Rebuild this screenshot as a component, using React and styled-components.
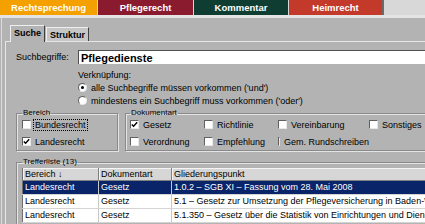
import React from "react";
import styled, { createGlobalStyle } from "styled-components";

const GlobalStyle = createGlobalStyle`
  html, body {
    margin: 0;
    padding: 0;
    overflow: hidden;
  }
  body {
    background: #b3b3b3;
    font-family: "Liberation Sans", Arial, sans-serif;
    font-size: 9px;
    color: #000;
  }
`;

const Page = styled.div`
  width: 480px;
  height: 224px;
  overflow: hidden;
`;

// farbige Bereichsreiter oben
const TopBar = styled.div`
  display: flex;
  gap: 1px;
  height: 15px;
  background: #d8d8d8;
  border-bottom: 3px solid #e4e4e4;
`;

const AreaTab = styled.div`
  width: ${(p) => p.$w}px;
  background: ${(p) => p.$bg};
  color: #fff;
  font-weight: bold;
  font-size: 9.5px;
  display: flex;
  align-items: center;
  justify-content: center;
  border-right: ${(p) => (p.$last ? "2px solid #6a6a6a" : "none")};
`;

const Frame = styled.div`
  margin-left: 1px;
  padding-left: 3px;
  border-left: 1px solid #dcdcdc;
  height: 206px;
`;

const TabStrip = styled.div`
  display: flex;
  align-items: flex-end;
  height: 23px;
  padding-left: 5px;
`;

const InnerTab = styled.div`
  position: relative;
  z-index: 1;
  box-sizing: border-box;
  width: ${(p) => p.$w}px;
  height: ${(p) => (p.$active ? 17 : 14)}px;
  margin-bottom: ${(p) => (p.$active ? -1 : 0)}px;
  margin-right: 1px;
  background: ${(p) => (p.$active ? "#b3b3b3" : "#c6c6c6")};
  border-top: 1px solid #eeeeee;
  border-left: 1px solid #eeeeee;
  border-right: 1px solid #404040;
  font-weight: bold;
  font-size: 9px;
  display: flex;
  align-items: center;
  justify-content: center;
  padding-bottom: ${(p) => (p.$active ? 2 : 0)}px;
`;

const Panel = styled.div`
  border-top: 1px solid #e6e6e6;
  border-left: 1px solid #e6e6e6;
  padding: 8px 0 0 10px;
`;

const SearchRow = styled.div`
  display: grid;
  grid-template-columns: 62px 1fr;
  align-items: center;
`;

const SearchInput = styled.input`
  box-sizing: border-box;
  height: 14px;
  margin: 0;
  padding: 0 2px;
  border: none;
  border-top: 1px solid #505050;
  border-left: 1px solid #505050;
  background: #fff;
  font-family: "Liberation Sans", Arial, sans-serif;
  font-weight: bold;
  font-size: 11px;
  color: #000;
  outline: none;
`;

const Options = styled.div`
  margin: 5px 0 0 62px;
`;

const OptionTitle = styled.div`
  line-height: 12px;
`;

const OptionLine = styled.div`
  display: flex;
  align-items: center;
  gap: 4px;
  height: 13px;
`;

const Radio = styled.span`
  box-sizing: border-box;
  width: 9px;
  height: 9px;
  border-radius: 50%;
  background: #fff;
  border: 1px solid;
  border-color: #606060 #e8e8e8 #e8e8e8 #606060;
  display: flex;
  align-items: center;
  justify-content: center;
  &::after {
    content: "";
    display: ${(p) => (p.$on ? "block" : "none")};
    width: 3px;
    height: 3px;
    border-radius: 50%;
    background: #000;
  }
`;

const GroupsRow = styled.div`
  display: flex;
  gap: 7px;
  margin-top: 1px;
`;

const Group = styled.fieldset`
  box-sizing: border-box;
  margin: 0;
  min-width: 0;
  width: ${(p) => (p.$w ? `${p.$w}px` : "auto")};
  flex: ${(p) => (p.$w ? "none" : "1")};
  padding: 0 ${(p) => p.$pl}px 2px ${(p) => p.$pl}px;
  border: 1px solid #8a8a8a;
  box-shadow: 1px 1px 0 #e4e4e4, inset 1px 1px 0 #e4e4e4;
`;

const Legend = styled.legend`
  padding: 0 1px;
  font-size: 8px;
  line-height: 10px;
`;

const BereichList = styled.div`
  display: flex;
  flex-direction: column;
  gap: 4px;
`;

const DocGrid = styled.div`
  display: grid;
  grid-template-columns: 74px 74px 91px auto;
  row-gap: 4px;
`;

const CheckItem = styled.div`
  display: flex;
  align-items: center;
  gap: 2px;
  height: 13px;
  white-space: nowrap;
`;

const Box = styled.span`
  box-sizing: border-box;
  width: 9px;
  height: 9px;
  background: #fff;
  border: 1px solid;
  border-color: #606060 #e8e8e8 #e8e8e8 #606060;
  display: flex;
  align-items: center;
  justify-content: center;
  svg {
    display: block;
  }
`;

const CheckLabel = styled.span`
  padding: 0 1px;
  line-height: 10px;
  border: 1px ${(p) => (p.$focus ? "dotted #000" : "solid transparent")};
`;

const ResultGroup = styled(Group)`
  margin-top: 6px;
  padding: 1px 0 0 5px;
  height: 80px;
`;

const Table = styled.table`
  border-collapse: collapse;
  table-layout: fixed;
  width: 470px;
  background: #fff;
  border-left: 1px solid #707070;
  white-space: nowrap;
`;

const HeadCell = styled.th`
  width: ${(p) => (p.$w ? `${p.$w}px` : "auto")};
  height: 12px;
  padding: 0 0 0 2px;
  background: #d6d6d6;
  border-right: 1px solid #808080;
  border-bottom: 1px solid #808080;
  box-shadow: inset 1px 1px 0 #f4f4f4;
  font-weight: normal;
  text-align: left;
  line-height: 11px;
  overflow: hidden;
`;

const Row = styled.tr`
  background: ${(p) => (p.$selected ? "#0a246a" : "#fff")};
  color: ${(p) => (p.$selected ? "#fff" : "#000")};
`;

const Cell = styled.td`
  height: 13px;
  padding: 0 0 0 2px;
  border-right: 1px solid #c8c8c8;
  border-bottom: 1px solid #d4d4d4;
  line-height: 13px;
  overflow: hidden;
`;

const Check = ({ on }) => (
  <Box>
    {on && (
      <svg width="7" height="7" viewBox="0 0 7 7">
        <path d="M0.8 3.4 L2.6 5.3 L6.2 1.2" fill="none" stroke="#000" strokeWidth="1.4" />
      </svg>
    )}
  </Box>
);

const areas = [
  { label: "Rechtsprechung", bg: "#f4a100", w: 97 },
  { label: "Pflegerecht", bg: "#8a1b2f", w: 95 },
  { label: "Kommentar", bg: "#0f3d32", w: 94 },
  { label: "Heimrecht", bg: "#c33a2b", w: 93 },
];

const docTypes = [
  { label: "Gesetz", on: true },
  { label: "Richtlinie" },
  { label: "Vereinbarung" },
  { label: "Sonstiges" },
  { label: "Verordnung" },
  { label: "Empfehlung" },
  { label: "Gem. Rundschreiben" },
];

const results = [
  ["Landesrecht", "Gesetz", "1.0.2 – SGB XI – Fassung vom 28. Mai 2008"],
  ["Landesrecht", "Gesetz", "5.1 – Gesetz zur Umsetzung der Pflegeversicherung in Baden-Württemberg"],
  ["Landesrecht", "Gesetz", "5.1.350 – Gesetz über die Statistik von Einrichtungen und Diensten der Pflege"],
];

const App = () => {
  return (
    <Page>
      <GlobalStyle />
      <TopBar>
        {areas.map((a, i) => (
          <AreaTab key={a.label} $bg={a.bg} $w={a.w} $last={i === areas.length - 1}>
            {a.label}
          </AreaTab>
        ))}
      </TopBar>
      <Frame>
        <TabStrip>
          <InnerTab $active $w={35}>Suche</InnerTab>
          <InnerTab $w={43}>Struktur</InnerTab>
        </TabStrip>
        <Panel>
          <SearchRow>
            <span>Suchbegriffe:</span>
            <SearchInput defaultValue="Pflegedienste" readOnly />
          </SearchRow>
          <Options>
            <OptionTitle>Verknüpfung:</OptionTitle>
            <OptionLine>
              <Radio $on />
              <span>alle Suchbegriffe müssen vorkommen ('und')</span>
            </OptionLine>
            <OptionLine>
              <Radio />
              <span>mindestens ein Suchbegriff muss vorkommen ('oder')</span>
            </OptionLine>
          </Options>
          <GroupsRow>
            <Group $w={102} $pl={5}>
              <Legend>Bereich</Legend>
              <BereichList>
                <CheckItem>
                  <Check />
                  <CheckLabel $focus>Bundesrecht</CheckLabel>
                </CheckItem>
                <CheckItem>
                  <Check on />
                  <CheckLabel>Landesrecht</CheckLabel>
                </CheckItem>
              </BereichList>
            </Group>
            <Group $pl={4}>
              <Legend>Dokumentart</Legend>
              <DocGrid>
                {docTypes.map((d) => (
                  <CheckItem key={d.label}>
                    <Check on={d.on} />
                    <CheckLabel>{d.label}</CheckLabel>
                  </CheckItem>
                ))}
              </DocGrid>
            </Group>
          </GroupsRow>
          <ResultGroup>
            <Legend>Trefferliste (13)</Legend>
            <Table>
              <thead>
                <tr>
                  <HeadCell $w={73}>Bereich ↓</HeadCell>
                  <HeadCell $w={70}>Dokumentart</HeadCell>
                  <HeadCell>Gliederungspunkt</HeadCell>
                </tr>
              </thead>
              <tbody>
                {results.map((r, i) => (
                  <Row key={i} $selected={i === 0}>
                    {r.map((c, j) => (
                      <Cell key={j}>{c}</Cell>
                    ))}
                  </Row>
                ))}
              </tbody>
            </Table>
          </ResultGroup>
        </Panel>
      </Frame>
    </Page>
  );
};

export default App;
